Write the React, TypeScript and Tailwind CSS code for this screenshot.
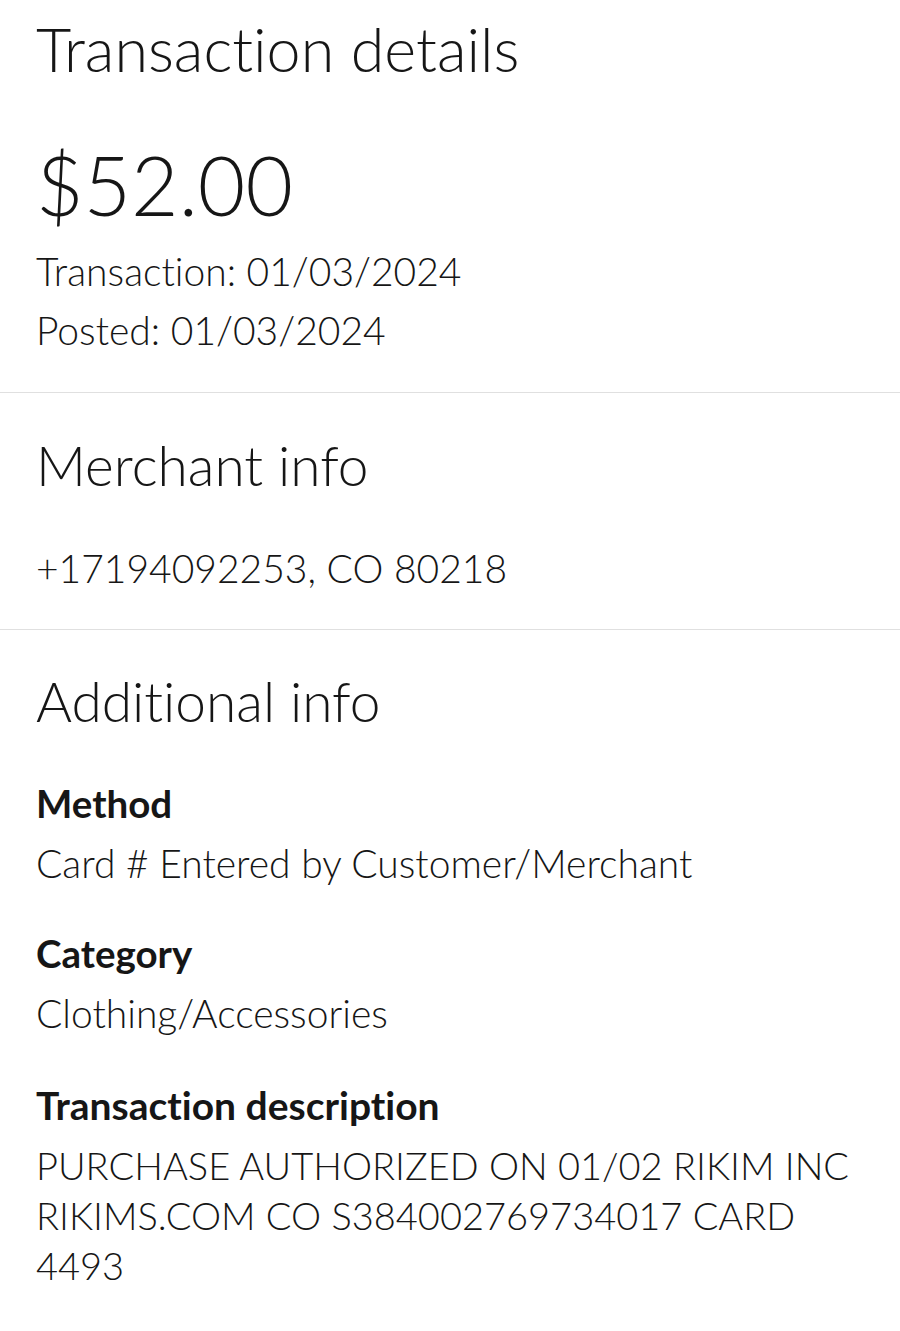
export default function App() {
  return (
    <div className="w-[900px] min-h-[1331px] bg-white font-['Lato',sans-serif] text-[#161616] [font-variant-ligatures:none]">
      <section className="pl-[36px] pr-[38px] pt-[13px] pb-[32px]">
        <h1 className="text-[61px] leading-[72px] font-light">Transaction details</h1>
        <div className="mt-[51px] text-[82px] leading-[96px] font-light">$52.00</div>
        <div className="mt-[10px] text-[39px] leading-[59px] font-light">Transaction: 01/03/2024</div>
        <div className="text-[39px] leading-[59px] font-light">Posted: 01/03/2024</div>
      </section>
      <div className="h-px bg-[#e0e0e0]" />
      <section className="pl-[36px] pr-[38px] pt-[40px] pb-[36px]">
        <h2 className="text-[55px] leading-[64px] font-light">Merchant info</h2>
        <div className="mt-[46px] text-[39px] leading-[50px] font-light">+17194092253, CO 80218</div>
      </section>
      <div className="h-px bg-[#e0e0e0]" />
      <section className="pl-[36px] pr-[38px] pt-[39px] pb-[40px]">
        <h2 className="text-[55px] leading-[64px] font-light">Additional info</h2>
        <div className="mt-[40px] flex flex-col">
          <div className="text-[38.5px] leading-[60px] font-bold">Method</div>
          <div className="mt-[5px] text-[39px] leading-[50px] font-light">Card # Entered by Customer/Merchant</div>
          <div className="mt-[35px] text-[38.5px] leading-[60px] font-bold">Category</div>
          <div className="mt-[5px] text-[39px] leading-[50px] font-light">Clothing/Accessories</div>
          <div className="mt-[37px] text-[39px] leading-[60px] font-bold">Transaction description</div>
          <div className="mt-[5px] text-[38px] leading-[50px] font-light">
            PURCHASE AUTHORIZED ON 01/02 RIKIM INC
            <br />
            RIKIMS.COM CO S384002769734017 CARD
            <br />
            4493
          </div>
        </div>
      </section>
    </div>
  );
}
